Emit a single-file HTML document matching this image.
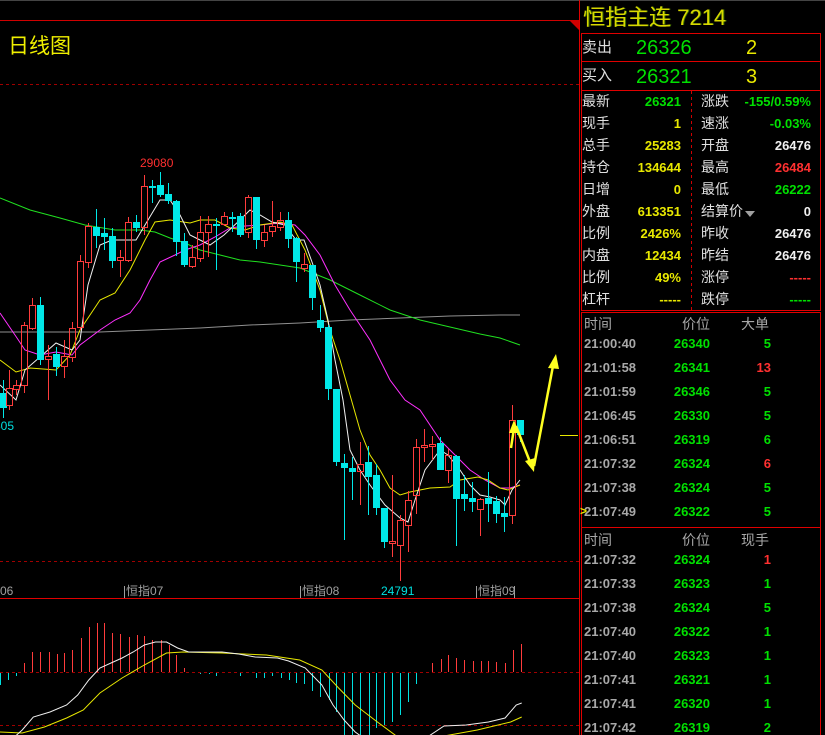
<!DOCTYPE html>
<html><head><meta charset="utf-8"><style>
html,body{margin:0;padding:0;background:#000;width:825px;height:735px;overflow:hidden;font-family:"Liberation Sans","Noto Sans CJK SC",sans-serif}
.t{position:absolute;white-space:nowrap;line-height:1}
.l{color:#e0e0e0;font-size:14px}
.v{font-size:13px;font-weight:bold;text-align:right}
.y{color:#e8e800}.g{color:#00e000}.w{color:#f0f0f0}.r{color:#ff3030}.gr{color:#a8a8a8}
</style></head><body>
<svg id="s" width="825" height="735" style="position:absolute;left:0;top:0">
<line x1="0" y1="0.5" x2="825" y2="0.5" stroke="#444"/>
<line x1="0" y1="20.5" x2="579" y2="20.5" stroke="#d00000" stroke-width="1"/>
<polygon points="570,21 579,21 579,30" fill="#d00000"/>
<line x1="0" y1="84.5" x2="579" y2="84.5" stroke="#a00000" stroke-dasharray="3,3"/>
<line x1="0" y1="561.5" x2="579" y2="561.5" stroke="#a00000" stroke-dasharray="3,3"/>
<line x1="0" y1="598.5" x2="579" y2="598.5" stroke="#e00000" stroke-width="1"/>
<line x1="0" y1="672.5" x2="579" y2="672.5" stroke="#a00000" stroke-dasharray="3,3"/>
<line x1="0" y1="725.5" x2="579" y2="725.5" stroke="#a00000" stroke-dasharray="3,3"/>
<line x1="579.5" y1="0" x2="579.5" y2="735" stroke="#e00000"/>
<g id="ma" fill="none" stroke-width="1"></g>
<g id="cd"></g>
<g id="mc"></g>
<text x="8" y="53" fill="#f0f000" font-size="21" font-family="Liberation Sans,Noto Sans CJK SC,sans-serif">日线图</text>
<text x="140" y="167" fill="#ff3030" font-size="12" font-family="Liberation Sans,sans-serif">29080</text>
<text x="-6" y="430" fill="#00e0e0" font-size="12" font-family="Liberation Sans,sans-serif">505</text>
<text x="381" y="595" fill="#00e0e0" font-size="12" font-family="Liberation Sans,sans-serif">24791</text>
<g fill="#a0a0a0" font-size="12" font-family="Liberation Sans,Noto Sans CJK SC,sans-serif">
<text x="0" y="595">06</text>
<text x="126" y="595">恒指07</text>
<text x="302" y="595">恒指08</text>
<text x="478" y="595">恒指09</text>
</g>
<g stroke="#a0a0a0"><line x1="124.5" y1="586" x2="124.5" y2="598"/><line x1="300.5" y1="586" x2="300.5" y2="598"/><line x1="476.5" y1="586" x2="476.5" y2="598"/><line x1="514.5" y1="586" x2="514.5" y2="598"/></g>
<line x1="560" y1="435.5" x2="578" y2="435.5" stroke="#e8e800"/>
<g stroke="#ffff20" stroke-width="2.5" fill="#ffff20">
<line x1="511" y1="448" x2="514" y2="428"/><polygon points="514,420 509,433 519,433" stroke="none"/>
<line x1="516" y1="426" x2="530" y2="462"/><polygon points="534,472 525,461 535,458" stroke="none"/>
<line x1="534" y1="466" x2="553" y2="366"/><polygon points="556,354 548,368 559,369" stroke="none"/>
</g>
<g stroke="#e00000" fill="none">
<rect x="581.5" y="33.5" width="239" height="277"/>
<line x1="581" y1="61.5" x2="821" y2="61.5"/>
<line x1="581" y1="90.5" x2="821" y2="90.5"/>
<rect x="581.5" y="312.5" width="239" height="430"/>
<line x1="581" y1="527.5" x2="821" y2="527.5"/>
</g>
<line x1="691.5" y1="91" x2="691.5" y2="310" stroke="#d00000" stroke-dasharray="3,3"/>
<polygon points="745,211 755,211 750,217" fill="#a0a0a0"/>
</svg>

<div class="t" style="left:583px;top:7px;font-size:22px;color:#d8d800;text-shadow:1px 0 #3a6a00">恒指主连 7214</div>
<div class="t l" style="left:582px;top:40px;font-size:15px">卖出</div>
<div class="t g" style="left:636px;top:38px;font-size:20px">26326</div>
<div class="t y" style="left:746px;top:38px;font-size:20px">2</div>
<div class="t l" style="left:582px;top:68px;font-size:15px">买入</div>
<div class="t g" style="left:636px;top:67px;font-size:20px">26321</div>
<div class="t y" style="left:746px;top:67px;font-size:20px">3</div>

<div id="grid"></div>
<div id="trades"></div>

<script>
var svgns="http://www.w3.org/2000/svg";
function el(p,n,a){var e=document.createElementNS(svgns,n);for(var k in a)e.setAttribute(k,a[k]);p.appendChild(e);return e;}
var C=[[3,393,408,380,418,0],[9,388,405,370,410,1],[16,385,389,380,395,1],[24,325,385,322,393,1],[32,305,328,298,330,1],[40,305,360,297,365,0],[48,356,359,345,400,1],[56,354,367,347,376,0],[64,356,366,340,378,1],[72,328,357,322,362,1],[80,261,327,255,330,1],[88,226,262,223,268,1],[96,227,236,209,248,0],[104,233,237,218,250,0],[112,236,261,228,268,0],[120,257,260,250,277,1],[128,222,260,217,262,1],[136,222,228,215,232,0],[144,186,227,175,235,1],[152,186,188,180,203,0],[160,185,195,172,197,0],[168,194,201,183,204,0],[176,201,242,200,256,0],[184,241,265,233,267,0],[192,257,266,245,268,1],[200,232,258,216,262,1],[208,224,232,216,257,1],[216,224,226,218,270,0],[224,216,224,212,226,1],[232,217,219,212,232,0],[240,216,235,213,237,0],[248,197,232,195,238,1],[256,197,240,197,249,0],[264,232,240,225,247,1],[272,226,231,201,237,1],[280,220,227,212,231,1],[288,220,239,212,248,0],[296,238,262,237,282,0],[304,264,268,253,272,1],[312,265,298,265,310,0],[320,320,328,305,332,0],[328,327,389,325,400,0],[336,389,462,389,466,0],[344,463,468,454,540,0],[352,468,472,457,500,0],[360,464,471,442,505,1],[368,462,477,446,515,0],[376,475,508,464,515,0],[384,508,542,508,548,0],[392,541,543,475,557,1],[400,520,545,515,581,1],[408,500,525,491,552,1],[416,447,495,439,514,1],[424,445,447,429,462,1],[432,444,446,436,460,1],[440,443,470,437,470,0],[448,455,470,449,483,1],[456,456,499,455,546,0],[464,494,499,475,511,0],[472,498,502,482,512,0],[480,499,509,498,536,1],[488,498,504,472,522,0],[496,501,514,496,523,0],[504,513,517,497,532,0],[512,420,515,405,524,1],[520,420,435,420,442,0]];
var cd=document.getElementById('cd');
C.forEach(function(c){var col=c[5]?'#ff3c3c':'#00e8e8';
 if(c[5]){el(cd,'line',{x1:c[0]+.5,y1:c[3],x2:c[0]+.5,y2:c[1],stroke:col});el(cd,'line',{x1:c[0]+.5,y1:c[2],x2:c[0]+.5,y2:c[4],stroke:col});el(cd,'rect',{x:c[0]-2.5,y:c[1]+.5,width:6,height:Math.max(1,c[2]-c[1]),fill:'none',stroke:col});}
 else{el(cd,'line',{x1:c[0]+.5,y1:c[3],x2:c[0]+.5,y2:c[4],stroke:col});el(cd,'rect',{x:c[0]-3,y:c[1],width:7,height:Math.max(2,c[2]-c[1]),fill:col});}
});
var ma=document.getElementById('ma');
function pl(g,pts,col,sx){if(sx){pts=pts.split(' ').map(function(p){var a=p.split(',');return (a[0]*sx).toFixed(1)+','+a[1];}).join(' ');}el(g,'polyline',{points:pts,stroke:col,fill:'none'});}
pl(ma,"0,332 100,332 150,330 200,328 250,325 300,323 350,320 400,318 450,316 500,315 520,315",'#909090');
pl(ma,"0,198 30,210 60,218 85,225 115,230 140,230 155,232 170,238 185,243 200,250 220,255 240,260 260,262 280,265 300,268 330,280 360,295 390,310 420,320 450,327 480,334 500,338 520,345",'#20e020');
pl(ma,"0,313 15,335 25,350 40,355 56,352 72,355 80,345 100,330 115,320 130,313 140,300 150,280 160,262 175,255 185,250 200,245 215,237 230,228 245,226 260,225 280,223 295,225 305,235 320,255 335,285 350,310 370,340 390,380 405,400 420,410 440,440 455,455 470,470 485,480 500,488 510,488 520,485",'#ff30ff');
pl(ma,"0,360 16,372 30,368 56,370 70,355 80,330 90,315 100,300 115,293 130,270 145,240 155,222 170,220 190,223 200,220 215,220 230,228 245,230 260,225 280,222 292,225 305,250 320,290 330,330 340,360 350,395 360,430 370,455 380,470 390,488 400,495 410,492 430,488 450,487 460,480 478,477 488,480 500,488 508,490 520,485",'#e8e800');
pl(ma,"0,385 16,400 25,370 40,357 56,343 72,350 80,340 88,285 100,245 112,240 136,240 148,220 160,200 170,200 180,215 190,235 200,240 210,245 224,235 240,220 250,210 260,215 272,222 285,225 296,240 304,240 312,262 320,285 328,320 335,360 343,400 350,450 360,470 370,485 385,505 400,518 408,522 415,500 425,470 440,450 448,455 460,470 470,485 480,495 490,497 500,500 505,505 512,490 520,480",'#f0f0f0');
var mc=document.getElementById('mc');var S=1.11;
var R=[[22,663],[29,652],[36,652],[44,652],[51,654],[58,653],[65,650],[73,638],[80,627],[87,623],[94,623],[101,633],[108,634],[116,637],[123,635],[130,636],[137,640],[145,640],[152,645],[159,655],[166,668],[389,663],[397,659],[404,655],[411,658],[418,660],[426,661],[433,661],[440,661],[447,662],[455,663],[462,650],[469,644]];
var B=[[0,685],[7,680],[14,676],[180,674],[188,674],[195,676],[216,676],[231,678],[238,678],[245,676],[253,678],[260,680],[267,683],[274,684],[281,691],[288,697],[296,700],[303,712],[310,735],[317,735],[324,735],[332,735],[339,728],[346,725],[353,722],[360,715],[368,702],[375,684]];
R.forEach(function(b){var x=Math.round(b[0]*S)+.5;el(mc,'line',{x1:x,y1:b[1],x2:x,y2:672,stroke:'#ff3c3c'});});
B.forEach(function(b){var x=Math.round(b[0]*S)+.5;el(mc,'line',{x1:x,y1:673,x2:x,y2:b[1],stroke:'#00e0e0'});});
pl(mc,"0,732 20,733 40,727 60,718 75,710 90,693 110,678 130,665 150,653 165,652 200,653 240,655 270,660 290,670 305,688 320,705 340,722 362,740",'#e8e800',S);
pl(mc,"400,736 430,730 460,722 470,717",'#e8e800',S);
pl(mc,"10,740 20,730 30,717 45,712 60,705 70,695 80,680 90,668 100,663 110,658 120,652 130,645 140,642 150,642 160,648 170,652 180,652 200,652 215,654 230,657 250,658 260,661 275,668 290,685 300,705 310,720 320,732 330,740",'#f0f0f0',S);
pl(mc,"385,737 400,726 420,725 440,722 455,718 465,705 470,703",'#f0f0f0',S);

var G=[["最新","26321","g","涨跌","-155/0.59%","g"],["现手","1","y","速涨","-0.03%","g"],["总手","25283","y","开盘","26476","w"],["持仓","134644","y","最高","26484","r"],["日增","0","y","最低","26222","g"],["外盘","613351","y","结算价","0","w"],["比例","2426%","y","昨收","26476","w"],["内盘","12434","y","昨结","26476","w"],["比例","49%","y","涨停","-----","r"],["杠杆","-----","y","跌停","-----","g"]];
var h="";
G.forEach(function(r,i){var y=94+i*22;
h+='<div class="t l" style="left:582px;top:'+y+'px">'+r[0]+'</div>';
h+='<div class="t v '+r[2]+'" style="left:600px;width:81px;top:'+(y+1)+'px">'+r[1]+'</div>';
h+='<div class="t l" style="left:701px;top:'+y+'px">'+r[3]+'</div>';
h+='<div class="t v '+r[5]+'" style="left:700px;width:111px;top:'+(y+1)+'px">'+r[4]+'</div>';});
document.getElementById('grid').innerHTML=h;
function sec(top,head,rows){var s='<div class="t gr" style="left:584px;top:'+top+'px;font-size:14px">时间</div><div class="t gr" style="left:682px;top:'+top+'px;font-size:14px">价位</div><div class="t gr" style="left:741px;top:'+top+'px;font-size:14px">'+head+'</div>';
rows.forEach(function(r,i){var y=top+20+i*24;
s+='<div class="t v gr" style="left:584px;top:'+y+'px;text-align:left">'+r[0]+'</div>';
s+='<div class="t v g" style="left:660px;width:50px;top:'+y+'px">'+r[1]+'</div>';
s+='<div class="t v '+r[3]+'" style="left:720px;width:51px;top:'+y+'px">'+r[2]+'</div>';});return s;}
var T=sec(317,"大单",[["21:00:40","26340","5","g"],["21:01:58","26341","13","r"],["21:01:59","26346","5","g"],["21:06:45","26330","5","g"],["21:06:51","26319","6","g"],["21:07:32","26324","6","r"],["21:07:38","26324","5","g"],["21:07:49","26322","5","g"]]);
T+=sec(533,"现手",[["21:07:32","26324","1","r"],["21:07:33","26323","1","g"],["21:07:38","26324","5","g"],["21:07:40","26322","1","g"],["21:07:40","26323","1","g"],["21:07:41","26321","1","g"],["21:07:41","26320","1","g"],["21:07:42","26319","2","g"]]);
T+='<div class="t" style="left:580px;top:505px;color:#e8e800;font-size:12px;font-weight:bold">&gt;</div>';
document.getElementById('trades').innerHTML=T;
</script>
</body></html>
